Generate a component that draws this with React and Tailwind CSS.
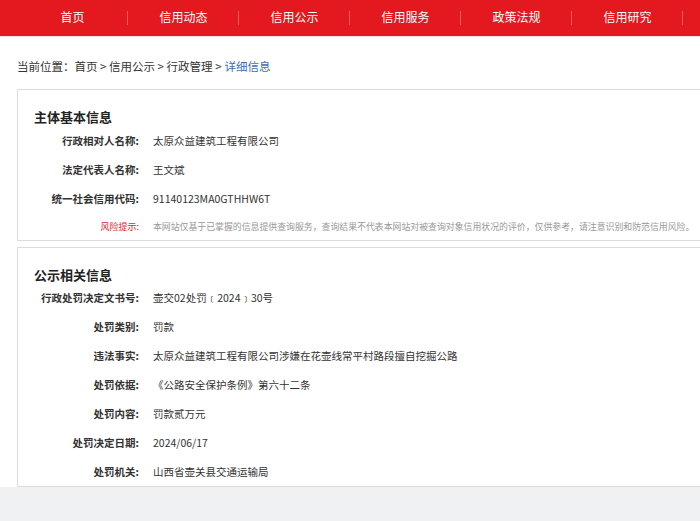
const navItems = ['首页', '信用动态', '信用公示', '信用服务', '政策法规', '信用研究'];

const basicInfo = [
  ['行政相对人名称:', '太原众益建筑工程有限公司'],
  ['法定代表人名称:', '王文斌'],
  ['统一社会信用代码:', '91140123MA0GTHHW6T'],
];

const publicInfo = [
  ['行政处罚决定文书号:', '壶交02处罚﹝2024﹞30号'],
  ['处罚类别:', '罚款'],
  ['违法事实:', '太原众益建筑工程有限公司涉嫌在花壶线常平村路段擅自挖掘公路'],
  ['处罚依据:', '《公路安全保护条例》第六十二条'],
  ['处罚内容:', '罚款贰万元'],
  ['处罚决定日期:', '2024/06/17'],
  ['处罚机关:', '山西省壶关县交通运输局'],
];

function Row({ label, value }) {
  return (
    <div className="flex items-center h-[29px]">
      <div className="w-[121px] shrink-0 text-right font-bold text-[10.5px] text-[#333]">{label}</div>
      <div className="pl-[14px] text-[10.5px] text-[#333] whitespace-nowrap">{value}</div>
    </div>
  );
}

export default function App() {
  return (
    <div
      className="w-[700px] h-[521px] overflow-hidden bg-[#f0f1f3]"
      style={{ fontFamily: '"Microsoft YaHei", "Noto Sans CJK SC", sans-serif' }}
    >
      {/* Nav */}
      <nav className="h-[36px] bg-[#e3191f] flex pl-[17px]">
        {navItems.map((item) => (
          <div key={item} className="relative w-[111px] shrink-0 flex items-center justify-center pb-[2px] text-white text-[12px]">
            {item}
            <span className="absolute right-0 top-[11px] h-[14px] w-px bg-[#ec5a5e]" />
          </div>
        ))}
      </nav>
      <div className="h-px bg-[#fbe3e3]" />

      {/* Content */}
      <div className="bg-white pl-[17px]">
        <div className="h-[52px] flex items-center text-[11.5px] text-[#333] pt-[8px]">
          当前位置：首页 &gt; 信用公示 &gt; 行政管理 &gt; <span className="text-[#3b6db3] ml-[3px]">详细信息</span>
        </div>

        <section className="w-[683px] border-l border-y border-[#dcdcdc] h-[152px] pl-[16px] pt-[16px]">
          <h2 className="text-[13px] font-bold text-[#222] leading-[22px] -mb-[2px]">主体基本信息</h2>
          <div className="-ml-[16px]">
            {basicInfo.map(([l, v]) => (
              <Row key={l} label={l} value={v} />
            ))}
            <div className="flex items-center h-[28px]">
              <div className="w-[121px] shrink-0 text-right text-[9px] text-[#e3191f]">风险提示:</div>
              <div className="pl-[14px] text-[8.9px] text-[#999] whitespace-nowrap">
                本网站仅基于已掌握的信息提供查询服务，查询结果不代表本网站对被查询对象信用状况的评价，仅供参考，请注意识别和防范信用风险。
              </div>
            </div>
          </div>
        </section>

        <div className="h-[6px]" />

        <section className="w-[683px] border-l border-y border-[#dcdcdc] h-[240px] pl-[16px] pt-[16px]">
          <h2 className="text-[13px] font-bold text-[#222] leading-[22px] -mb-[3px]">公示相关信息</h2>
          <div className="-ml-[16px]">
            {publicInfo.map(([l, v]) => (
              <Row key={l} label={l} value={v} />
            ))}
          </div>
        </section>
      </div>
    </div>
  );
}
